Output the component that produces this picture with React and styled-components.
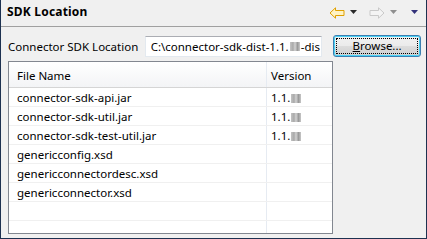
import React from "react";
import styled, { createGlobalStyle } from "styled-components";

const GlobalStyle = createGlobalStyle`
  html, body {
    margin: 0;
    padding: 0;
    background: #f0f0f0;
  }
  body {
    font-family: "Noto Sans", "Open Sans", sans-serif;
    font-size: 11.5px;
    color: #000;
  }
`;

const Window = styled.div`
  width: 427px;
  height: 239px;
  box-sizing: border-box;
  border: 1px solid #1d3150;
  border-top: none;
  background: #f0f0f0;
  display: flex;
  flex-direction: column;
`;

const TitleBar = styled.div`
  height: 27px;
  box-sizing: border-box;
  border-bottom: 1px solid #a0a0a0;
  display: flex;
  align-items: center;
  justify-content: space-between;
  padding: 0 7px 3px 6px;
`;

const Title = styled.h1`
  margin: 0;
  font-size: 12px;
  font-weight: 700;
  letter-spacing: 0.2px;
`;

const NavTools = styled.div`
  display: flex;
  align-items: center;
  gap: 5px;
  padding-top: 2px;
`;

const Body = styled.div`
  flex: 1;
  display: flex;
  flex-direction: column;
  padding: 8px 5px 4px 6px;
  gap: 4px;
`;

const LocationRow = styled.div`
  display: flex;
  align-items: center;
  height: 22px;
`;

const Label = styled.label`
  width: 137px;
  padding-left: 1px;
  white-space: nowrap;
`;

const PathField = styled.div`
  width: 178px;
  height: 21px;
  box-sizing: border-box;
  border: 1px solid #e3e9ef;
  border-top-color: #abadb3;
  background: #fff;
  padding: 0 0 0 5px;
  display: flex;
  align-items: center;
  overflow: hidden;
  white-space: nowrap;
`;

const Blur = styled.span`
  display: inline-block;
  flex-shrink: 0;
  width: 10px;
  height: 9px;
  margin: 1px 1px 0;
  background: linear-gradient(90deg, #c4c4c4, #a9a9a9 30%, #d2d2d2 50%, #9a9a9a 75%, #c8c8c8);
  filter: blur(0.5px);
  vertical-align: middle;
`;

const BrowseButton = styled.button`
  margin-left: 11px;
  width: 88px;
  height: 22px;
  box-sizing: border-box;
  border: 1px solid #3c7fb1;
  border-radius: 3px;
  background: linear-gradient(#f2f2f2 0%, #ebebeb 48%, #dddddd 52%, #cfcfcf 100%);
  box-shadow: inset 0 0 0 1px #48d2f6;
  font-family: inherit;
  font-size: 11.5px;
  color: #000;
  padding: 2px;
  display: flex;
`;

const FocusRing = styled.span`
  flex: 1;
  border: 1px dotted #000;
  display: flex;
  align-items: center;
  justify-content: center;
  line-height: 1;
  u {
    text-decoration-thickness: 1px;
  }
`;

const Table = styled.div`
  width: 325px;
  height: 173px;
  box-sizing: border-box;
  border: 1px solid #828790;
  background: #fff;
  margin-left: 1px;
  overflow: hidden;
`;

const Row = styled.div`
  display: grid;
  grid-template-columns: 257px 1fr;
  height: ${p => (p.$header ? 26 : 19)}px;
  box-sizing: border-box;
  border-bottom: 1px solid ${p => (p.$header ? "#d5d5d5" : "#f0f0f0")};
  background: ${p => (p.$header ? "linear-gradient(#ffffff, #f3f4f6)" : "#fff")};
`;

const Cell = styled.div`
  display: flex;
  align-items: center;
  padding-top: 1px;
  white-space: nowrap;
  border-left: ${p => (p.$second ? "1px solid #e6ebf2" : "none")};
  padding-left: ${p => (p.$second ? 4 : 8)}px;
`;

const Tri = ({ color, w = 7 }) => (
  <svg width={w} height="5" viewBox="0 0 7 5">
    <path d="M0 0h7L3.5 4z" fill={color} />
  </svg>
);

const Arrow = ({ dir, stroke, fill }) => (
  <svg width="16" height="12" viewBox="0 0 16 12">
    <path
      d={
        dir === "left"
          ? "M1 6 6.5 0.8V3.5H15V8.5H6.5V11.2Z"
          : "M15 6 9.5 0.8V3.5H1V8.5H9.5V11.2Z"
      }
      fill={fill}
      stroke={stroke}
      strokeWidth="1"
      strokeLinejoin="miter"
    />
  </svg>
);

const files = [
  ["connector-sdk-api.jar", true],
  ["connector-sdk-util.jar", true],
  ["connector-sdk-test-util.jar", true],
  ["genericconfig.xsd", false],
  ["genericconnectordesc.xsd", false],
  ["genericconnector.xsd", false],
  ["", false],
  ["", false],
];

export default function App() {
  return (
    <>
      <GlobalStyle />
      <Window>
        <TitleBar>
          <Title>SDK Location</Title>
          <NavTools>
            <Arrow dir="left" stroke="#e0a000" fill="#fff3c4" />
            <Tri color="#2a2a2a" />
            <span style={{ width: 2 }} />
            <Arrow dir="right" stroke="#c9c9c9" fill="#f4f4f4" />
            <Tri color="#8f8f8f" />
            <span style={{ width: 3 }} />
            <Tri color="#33327a" w={9} />
          </NavTools>
        </TitleBar>
        <Body>
          <LocationRow>
            <Label>Connector SDK Location</Label>
            <PathField>
              C:\connector-sdk-dist-1.1.<Blur />-dis
            </PathField>
            <BrowseButton>
              <FocusRing>
                <span>
                  <u>B</u>rowse...
                </span>
              </FocusRing>
            </BrowseButton>
          </LocationRow>
          <Table>
            <Row $header>
              <Cell>File Name</Cell>
              <Cell $second>Version</Cell>
            </Row>
            {files.map(([name, ver], i) => (
              <Row key={i}>
                <Cell>{name}</Cell>
                <Cell $second>
                  {ver && (
                    <>
                      1.1.<Blur />
                    </>
                  )}
                </Cell>
              </Row>
            ))}
          </Table>
        </Body>
      </Window>
    </>
  );
}
